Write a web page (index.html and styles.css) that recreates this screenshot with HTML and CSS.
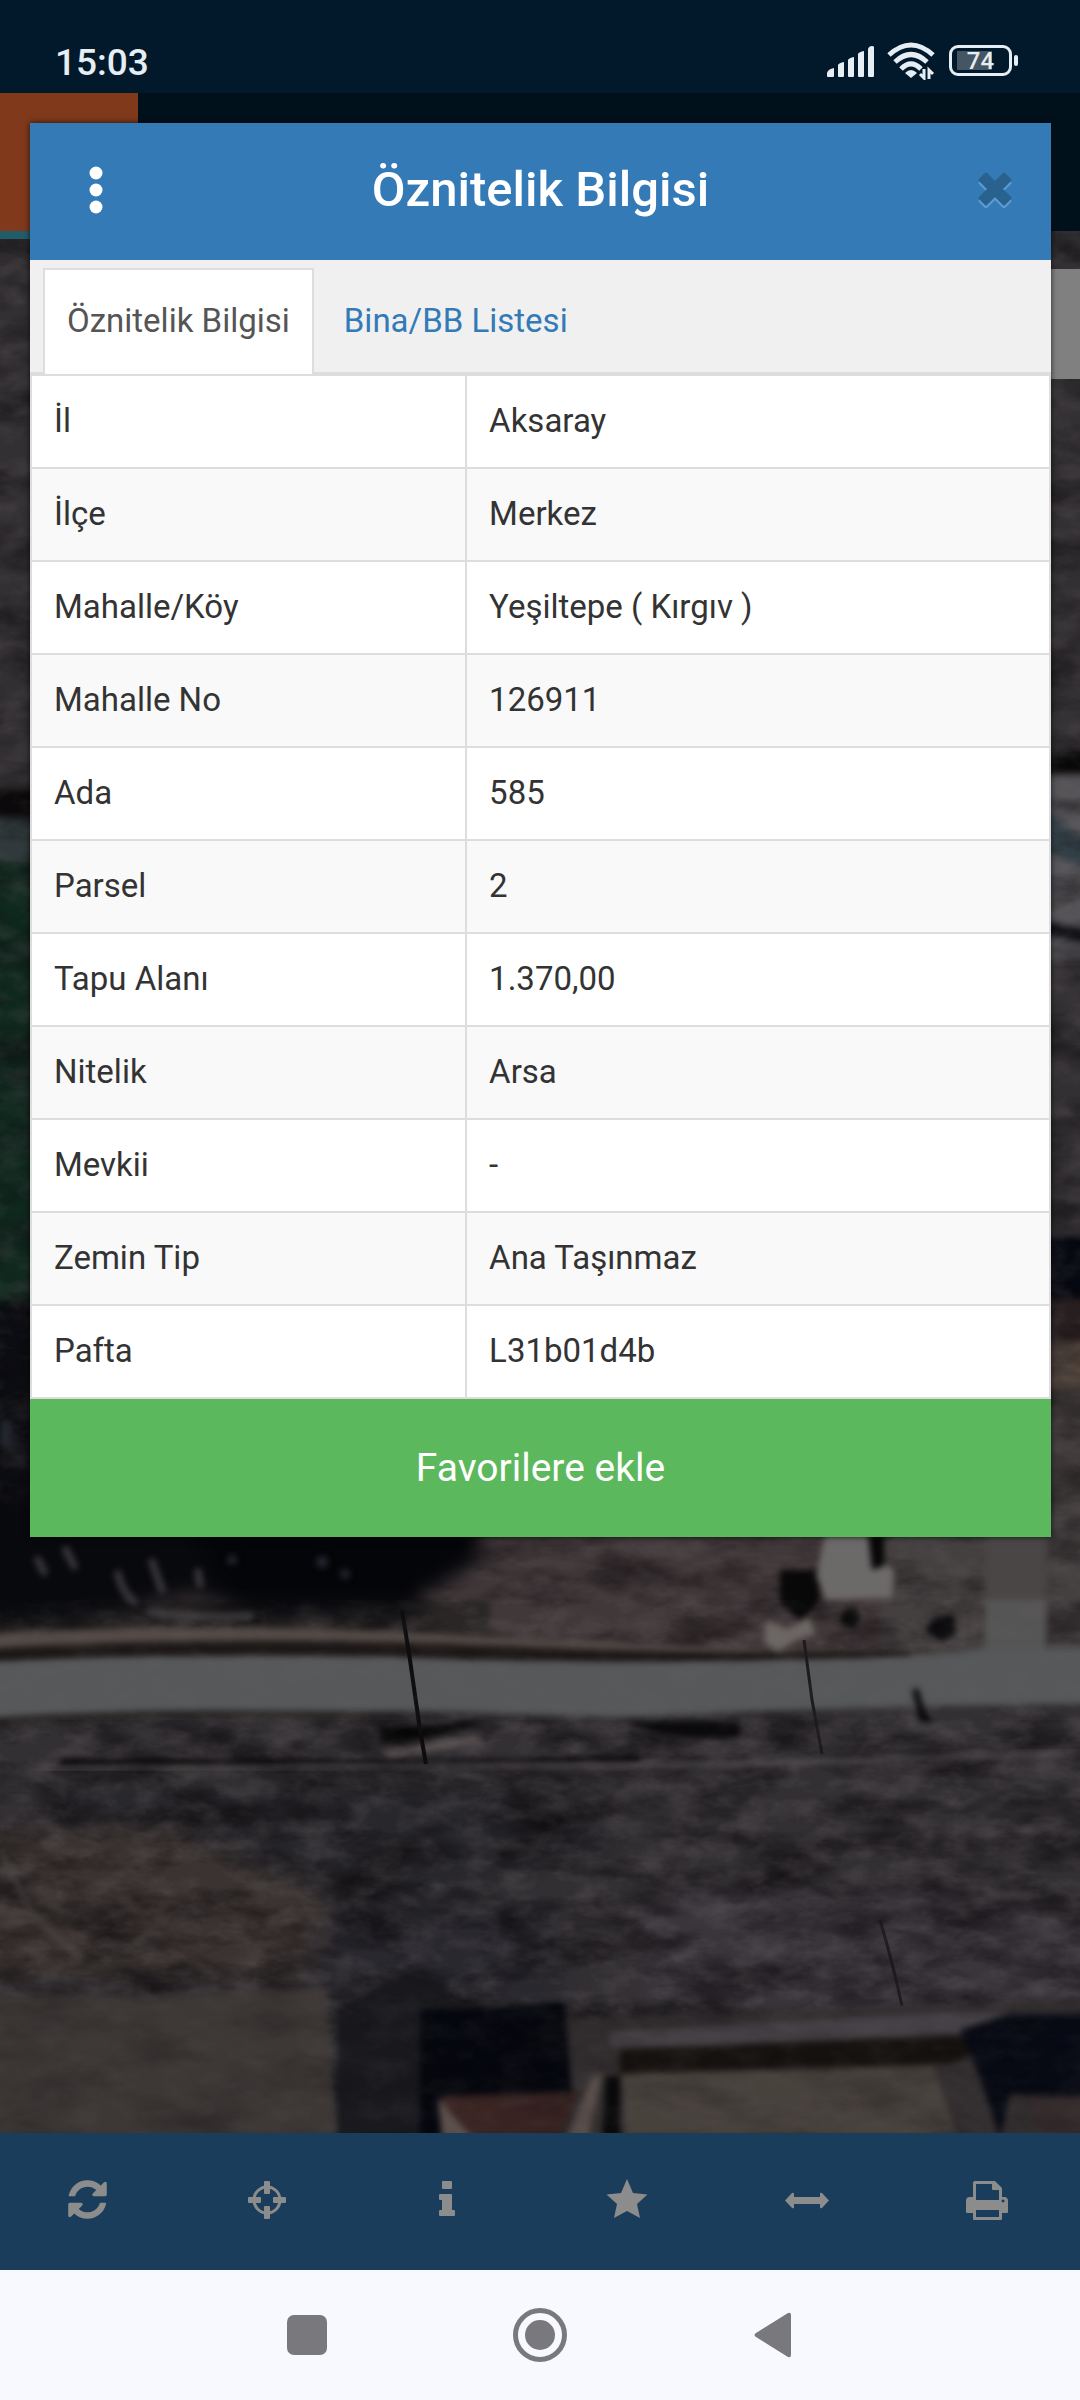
FILE: index.html
```html
<!DOCTYPE html>
<html lang="tr">
<head>
  <meta charset="UTF-8">
  <meta name="viewport" content="width=device-width, initial-scale=1.0">
  <title>Öznitelik Bilgisi</title>
  <link rel="stylesheet" href="styles.css">
</head>
<body>
  <div class="phone">
    <div class="status-bar">
      <span class="clock">15:03</span>
      <div class="status-icons">
        <svg class="signal" viewBox="0 0 48 32" width="48" height="32" fill="#e6edf3">
          <path d="M0 31v-3q1-4 7-5v8q0 1-1 1H1q-1 0-1-1zM11 31V20q1-2 6-3v14q0 1-1 1h-4q-1 0-1-1zM21 31V15q1-2 6-3v19q0 1-1 1h-4q-1 0-1-1zM31 31V9q1-2 6-3v25q0 1-1 1h-4q-1 0-1-1zM41 31V4q1-3 4-3 2 0 2 1v29q0 1-1 1h-4q-1 0-1-1z"/>
        </svg>
        <svg class="wifi" viewBox="0 0 48 38" width="48" height="38">
          <g fill="none" stroke="#e6edf3" stroke-width="5">
            <path d="M2 13Q24-7 46 13"/>
            <path d="M8 20Q24 5 40 20"/>
            <path d="M14 27Q24 17 34 27"/>
          </g>
          <path d="M24 36l-6-5q6-6 12 0z" fill="#e6edf3"/>
          <path d="M37 27v9l-4-4M42 37v-9l4 4" fill="none" stroke="#e6edf3" stroke-width="3"/>
        </svg>
        <div class="battery"><span>74</span></div>
      </div>
    </div>

    <header class="app-header">
      <div class="app-logo"></div>
    </header>

    <main class="map">
      <svg class="map-image" viewBox="0 231 1080 1902" preserveAspectRatio="xMidYMax slice">
        <defs>
          <filter id="soft" x="-10%" y="-10%" width="120%" height="120%" color-interpolation-filters="sRGB"><feGaussianBlur stdDeviation="3"/></filter>
          <filter id="softer" x="-20%" y="-20%" width="140%" height="140%" color-interpolation-filters="sRGB"><feGaussianBlur stdDeviation="10"/></filter>
          <filter id="shade" x="0" y="0" width="100%" height="100%" color-interpolation-filters="sRGB">
            <feTurbulence type="fractalNoise" baseFrequency="0.012 0.03" numOctaves="5" seed="7"/>
            <feColorMatrix values="0 0 0 0 0.04  0 0 0 0 0.03  0 0 0 0 0.04  2 0 0 0 -0.8"/>
          </filter>
          <filter id="light" x="0" y="0" width="100%" height="100%" color-interpolation-filters="sRGB">
            <feTurbulence type="fractalNoise" baseFrequency="0.03 0.05" numOctaves="4" seed="21"/>
            <feColorMatrix values="0 0 0 0 0.46  0 0 0 0 0.43  0 0 0 0 0.44  0 2 0 0 -0.8"/>
          </filter>
        </defs>
        <rect y="231" width="1080" height="1902" fill="#333033"/>

        <!-- strips beside the dialog -->
        <g filter="url(#soft)">
          <path d="M-10 790h60v26h-60z" fill="#0c0a0b"/>
          <path d="M-10 816h60v50h-60z" fill="#30393b"/>
          <path d="M-10 862h60v440h-60z" fill="#10291f"/>
          <path d="M-10 1302h60v240h-60z" fill="#0c0d12"/>
          <path d="M1040 752h50v20h-50z" fill="#080808"/>
          <path d="M1040 776h50v184h-50z" fill="#555357"/>
          <path d="M1040 850l50 20v-30l-50-30z" fill="#323f46"/>
          <path d="M1040 920l50 10v14l-50-10z" fill="#111216"/>
          <path d="M1040 1236h50v62h-50z" fill="#050811"/>
          <path d="M1040 1298h50v44h-50z" fill="#281e1f"/>
          <path d="M1040 1342h50v46h-50z" fill="#55483f"/>
          <path d="M1040 1388h50v280h-50z" fill="#3c3736"/>
        </g>

        <!-- ground north of the road -->
        <g filter="url(#soft)">
          <path d="M40 1500h1050v170H40z" fill="#413839"/>
          <path d="M880 1500h210v160H880z" fill="#454040"/>
          <path d="M-10 1600h500v60H-10z" fill="#2a2625"/>
        </g>

        <!-- field -->
        <g filter="url(#softer)">
          <path d="M40 1784h500l100 60-180 50H60z" fill="#28272b"/>
          <path d="M-20 1830l180-10 170 80-30 80H-20z" fill="#3a3331"/>
          <path d="M330 1900h220l20 100H330z" fill="#29282e"/>
          <path d="M640 1900l300-20 150 40v90H640z" fill="#39353b"/>
        </g>

        <rect y="231" width="1080" height="1902" filter="url(#shade)" opacity=".6"/>
        <rect y="231" width="1080" height="1902" filter="url(#light)" opacity=".22"/>

        <!-- trees -->
        <g filter="url(#softer)">
          <path d="M-20 1500h500v62l-50 22-18 30H250l-60-20-60 14-60 14H-20z" fill="#08090d"/>
          <path d="M190 1530h285v35l-60 35H230z" fill="#040509"/>
        </g>
        <g filter="url(#soft)" fill="none" stroke="#4a474c" stroke-width="8" stroke-linecap="round" opacity=".7">
          <path d="M118 1574q4 18 16 28M152 1562l10 28M198 1572l2 12M38 1560l6 12M66 1550l8 16"/>
          <path d="M150 1612q50 8 100 4"/>
        </g>
        <g filter="url(#soft)" fill="#24262e">
          <circle cx="232" cy="1560" r="5"/>
          <circle cx="322" cy="1562" r="6"/>
          <circle cx="345" cy="1574" r="5"/>
          <path d="M0 1420h12v28H0z"/>
        </g>
        <g filter="url(#soft)">
          <path d="M-10 1634q250-14 520 4 180 8 260 12v6q-200 0-330-8-220-12-450 2z" fill="#544b48"/>
          <path d="M-10 1648q250-14 520-2 180 8 400 6v7q-200 8-400 2-260-10-520 4z" fill="#1d1817"/>
          <path d="M985 1500h62v170h-62z" fill="#4a4646"/>
          <path d="M985 1600h60v66h-60z" fill="#565555"/>
        </g>

        <!-- road -->
        <g filter="url(#soft)">
          <path d="M-10 1662q200-10 420-4 200 8 380 2 150-2 195-12h105v56q-260 2-480 14-220-14-620 0z" fill="#56585a"/>
          <path d="M-10 1720q200-12 380-4" fill="none" stroke="#25211f" stroke-width="5"/>
          <path d="M380 1728q60-4 110-8l-50 16-60 7z" fill="#050505"/>
          <path d="M630 1721h110v16q-60 6-110-12z" fill="#0b0a0b"/>
          <path d="M60 1759l380 1 200-4v6l-200 4H60z" fill="#080708"/>
          <path d="M380 1752l100-18v8l-90 16z" fill="#5c5353"/>
        </g>
        <path d="M40 1769q350-4 620-4 250-4 420-14" fill="none" stroke="#5d585a" stroke-width="3" filter="url(#soft)"/>

        <!-- rubble and poles -->
        <g filter="url(#soft)">
          <path d="M780 1570h38l2 30-18 22-22-18z" fill="#080809"/>
          <path d="M826 1530h46l8 30 14 10-2 28-66 2-10-24z" fill="#6c6a68"/>
          <path d="M868 1534h16v32l-12 4z" fill="#070708"/>
          <circle cx="850" cy="1618" r="10" fill="#080808"/>
          <path d="M924 1630l10-12 20-4 2 20-14 8z" fill="#09090b"/>
          <path d="M766 1620l22 10 20-14 8 18-20 6-18 12-14-10z" fill="#6c6765"/>
          <path d="M912 1690l8 32 14 0-8-8-8-26z" fill="#050505"/>
        </g>
        <path d="M402 1610l8 50 10 70 6 34" fill="none" stroke="#0d0d0f" stroke-width="4"/>
        <path d="M804 1640l8 60 10 54" fill="none" stroke="#1c1b1d" stroke-width="3"/>
        <path d="M880 1920q12 40 22 86" fill="none" stroke="#1d1b1e" stroke-width="3"/>
        <path d="M0 1850l30 60 50 50" fill="none" stroke="#4a4544" stroke-width="4" filter="url(#soft)"/>

        <!-- buildings along the bottom -->
        <g filter="url(#soft)">
          <path d="M-10 1994l180 2 155-8 12 150H-10z" fill="#3d3836"/>
          <path d="M337 2010l70-40 40 10v160H337z" fill="#1a1a1e"/>
          <path d="M560 2020l420-16 110-6v140H570z" fill="#332f30"/>
          <path d="M610 2032l350-20 60 2v10l-60 10-350 14z" fill="#454045"/>
          <path d="M620 2050l330-14 60 4-60 24-330 10z" fill="#15120f"/>
          <path d="M622 2074l310-8 26 70H626z" fill="#48423d"/>
          <path d="M420 2010l144-8 8 90-130 6v40h-22z" fill="#05070e"/>
          <path d="M442 2096l136-4-18 46H442z" fill="#3a2523"/>
          <path d="M438 2098l34 40h-30zM566 2138l26-60 10-4-14 64z" fill="#5a4f4a"/>
          <path d="M606 2076h14v62h-18z" fill="#080808"/>
          <path d="M960 2030l50-16h80v84l-80-4-10 44-20-60z" fill="#070a14"/>
          <path d="M1024 2096h66v42h-50z" fill="#352c2d"/>
        </g>

        <rect y="1720" width="1080" height="413" filter="url(#shade)" opacity=".25"/>
        <rect y="1600" width="1080" height="533" filter="url(#light)" opacity=".1"/>
      </svg>
      <div class="map-control"></div>
    </main>

    <nav class="toolbar" aria-label="Harita araçları">
      <button class="tool" aria-label="Yenile">
        <svg viewBox="0 0 1536 1792" width="39" height="45"><path d="M1511 1056q0 5-1 7-64 268-268 434.500T764 1664q-146 0-282.500-55T238 1452l-129 129q-19 19-45 19t-45-19-19-45v-448q0-26 19-45t45-19h448q26 0 45 19t19 45-19 45l-137 137q71 66 161 102t187 36q134 0 250-65t186-179q11-17 53-117 8-23 30-23h192q13 0 22.500 9.500t9.500 22.500zm25-800v448q0 26-19 45t-45 19h-448q-26 0-45-19t-19-45 19-45l138-138Q969 384 768 384q-134 0-250 65T332 628q-11 17-53 117-8 23-30 23H50q-13 0-22.500-9.500T18 736v-7q65-268 270-434.500T768 128q146 0 284 55.500T1297 340l130-129q19-19 45-19t45 19 19 45z"/></svg>
      </button>
      <button class="tool" aria-label="Konum">
        <svg viewBox="0 0 44 44" width="44" height="44">
          <circle cx="22" cy="22" r="13" fill="none" stroke="#8c8c8c" stroke-width="3"/>
          <rect x="19" y="3" width="6" height="13" rx="1"/>
          <rect x="19" y="28" width="6" height="13" rx="1"/>
          <rect x="3" y="19" width="13" height="6" rx="1"/>
          <rect x="28" y="19" width="13" height="6" rx="1"/>
        </svg>
      </button>
      <button class="tool" aria-label="Bilgi">
        <svg viewBox="0 0 44 44" width="44" height="44">
          <rect x="17" y="3" width="10" height="8" rx="1"/>
          <path d="M15 16h11q1 0 1 1v15h2q1 0 1 1v4q0 1-1 1H15q-1 0-1-1v-4q0-1 1-1h2V22h-2q-1 0-1-1v-4q0-1 1-1z"/>
        </svg>
      </button>
      <button class="tool" aria-label="Favoriler">
        <svg viewBox="0 0 44 44" width="44" height="44"><path d="M22 1l6 14 14.500 1.500L32 26l3 14-13-7-13 7 3-14L1.500 16.500 16 15z"/></svg>
      </button>
      <button class="tool" aria-label="Ölçüm">
        <svg viewBox="0 0 44 44" width="44" height="44"><path d="M0 22.500L7 15q2-1 2 1v3h26v-3q0-2 2-1l7 7.500-7 7.500q-2 1-2-1v-3H9v3q0 2-2 1z"/></svg>
      </button>
      <button class="tool" aria-label="Yazdır">
        <svg viewBox="0 0 44 44" width="44" height="44">
          <path fill-rule="evenodd" d="M10 3h20l7 7v9h2q4 0 4 4v11q0 1-1 1h-5v6q0 1-1 1H9q-1 0-1-1v-6H2q-1 0-1-1V23q0-4 4-4h3V5q0-2 2-2zm1 3v16h23V12h-6q-1 0-1-1V6zm0 26v7h23v-7zM38 21.500a1.500 1.500 0 1 0 .1 0z"/>
        </svg>
      </button>
    </nav>

    <nav class="system-nav" aria-label="Sistem">
      <button class="sys" aria-label="Son uygulamalar">
        <svg viewBox="0 0 56 56" width="56" height="56"><rect x="8" y="8" width="40" height="40" rx="7"/></svg>
      </button>
      <button class="sys" aria-label="Ana ekran">
        <svg viewBox="0 0 56 56" width="56" height="56"><circle cx="28" cy="28" r="24.500" fill="none" stroke="#79787c" stroke-width="5"/><circle cx="28" cy="28" r="15"/></svg>
      </button>
      <button class="sys" aria-label="Geri">
        <svg viewBox="0 0 56 56" width="56" height="56"><path d="M11 26L43 6q3-1 3 2v40q0 3-3 2L11 30q-3-2 0-4z"/></svg>
      </button>
    </nav>

    <section class="modal" role="dialog" aria-labelledby="modalTitle">
      <div class="modal-header">
        <button class="icon-btn" aria-label="Menü">
          <svg viewBox="0 0 14 48" width="14" height="48" fill="#fff"><circle cx="7" cy="7" r="6.500"/><circle cx="7" cy="24" r="6.500"/><circle cx="7" cy="41" r="6.500"/></svg>
        </button>
        <h1 class="modal-title" id="modalTitle">Öznitelik Bilgisi</h1>
        <button class="icon-btn close" aria-label="Kapat">
          <svg viewBox="0 0 34 36" width="34" height="36">
            <g stroke-linejoin="round" stroke-width="3">
              <path d="M8 5l9 9 9-9 6 6-9 9 9 9-6 6-9-9-9 9-6-6 9-9-9-9z" fill="#5b9bd0" stroke="#5b9bd0"/>
              <path d="M8 2l9 9 9-9 6 6-9 9 9 9-6 6-9-9-9 9-6-6 9-9-9-9z" fill="#29628f" stroke="#29628f"/>
            </g>
          </svg>
        </button>
      </div>

      <div class="tabs">
        <a class="tab active" href="#oznitelik">Öznitelik Bilgisi</a>
        <a class="tab" href="#bina">Bina/BB Listesi</a>
      </div>

      <table class="info-table" id="oznitelik">
        <tbody>
          <tr><th scope="row">İl</th><td>Aksaray</td></tr>
          <tr><th scope="row">İlçe</th><td>Merkez</td></tr>
          <tr><th scope="row">Mahalle/Köy</th><td>Yeşiltepe ( Kırgıv )</td></tr>
          <tr><th scope="row">Mahalle No</th><td>126911</td></tr>
          <tr><th scope="row">Ada</th><td>585</td></tr>
          <tr><th scope="row">Parsel</th><td>2</td></tr>
          <tr><th scope="row">Tapu Alanı</th><td>1.370,00</td></tr>
          <tr><th scope="row">Nitelik</th><td>Arsa</td></tr>
          <tr><th scope="row">Mevkii</th><td>-</td></tr>
          <tr><th scope="row">Zemin Tip</th><td>Ana Taşınmaz</td></tr>
          <tr><th scope="row">Pafta</th><td>L31b01d4b</td></tr>
        </tbody>
      </table>

      <button class="btn-favorite">Favorilere ekle</button>
    </section>
  </div>
</body>
</html>
```
FILE: styles.css
```css
:root {
  --primary: #337ab7;
  --success: #5cb85c;
  --border: #ddd;
  --text: #333;
}

* {
  margin: 0;
  padding: 0;
  box-sizing: border-box;
}

body {
  font-family: Roboto, "Noto Sans", sans-serif;
  font-size: 33px;
  color: var(--text);
  background: #00111c;
}

button {
  border: none;
  background: none;
  font-family: inherit;
  cursor: pointer;
}

svg {
  display: block;
}

.phone {
  position: relative;
  display: flex;
  flex-direction: column;
  min-height: 100vh;
}

/* status bar */
.status-bar {
  display: flex;
  justify-content: space-between;
  align-items: center;
  height: 93px;
  padding: 28px 62px 0 55px;
  background: #01192b;
  color: #e6edf3;
}

.clock {
  padding-top: 4px;
  font-size: 37px;
  font-weight: 500;
}

.status-icons {
  display: flex;
  align-items: center;
  gap: 12px;
}

.battery {
  position: relative;
  display: flex;
  align-items: center;
  justify-content: center;
  width: 63px;
  height: 31px;
  margin-left: 2px;
  margin-right: 6px;
  border: 3px solid #e6edf3;
  border-radius: 9px;
  font-size: 24px;
  font-weight: 500;
  line-height: 24px;
  background: linear-gradient(#455561, #455561) 5px center / 35px 19px no-repeat;
}

.battery::after {
  content: "";
  position: absolute;
  right: -9px;
  width: 4px;
  height: 11px;
  border-radius: 2px;
  background: #e6edf3;
}

/* page behind the dialog */
.app-header {
  height: 138px;
  background: #00111c;
}

.app-logo {
  width: 138px;
  height: 146px;
  background: #80391b;
  border-bottom: 8px solid #235c69;
  position: relative;
  z-index: 1;
}

.map {
  position: relative;
  flex: 1;
  overflow: hidden;
  background: #333033;
}

.map-image {
  position: absolute;
  inset: 0;
  width: 100%;
  height: 100%;
}

.map-control {
  position: absolute;
  top: 38px;
  right: 0;
  width: 110px;
  height: 110px;
  background: #808080;
}

.toolbar {
  display: flex;
  height: 137px;
  background: #1a3d5c;
}

.tool {
  flex: 1;
  display: flex;
  align-items: center;
  justify-content: center;
  padding-right: 6px;
  padding-bottom: 4px;
  fill: #8c8c8c;
}

.system-nav {
  display: flex;
  justify-content: center;
  align-items: center;
  gap: 133px;
  height: 130px;
  background: #f8f8ff;
}

.sys {
  display: flex;
  justify-content: center;
  width: 100px;
  fill: #79787c;
}

/* dialog */
.modal {
  position: absolute;
  top: 123px;
  left: 30px;
  right: 29px;
  z-index: 2;
  background: #fff;
  box-shadow: 0 0 6px rgba(0, 0, 0, 0.7);
}

.modal-header {
  display: flex;
  align-items: center;
  justify-content: space-between;
  height: 137px;
  padding: 0 12px 4px 22px;
  background: var(--primary);
}

.modal-title {
  font-size: 49px;
  font-weight: 500;
  color: #fff;
}

.icon-btn {
  display: flex;
  justify-content: center;
  width: 88px;
  padding: 16px 0;
}

.icon-btn.close {
  margin-left: 10px;
}

.tabs {
  display: flex;
  gap: 6px;
  padding: 8px 13px 0;
  background: #f0f0f0;
  border-bottom: 2px solid var(--border);
}

.tab {
  margin-bottom: -2px;
  padding: 26px 22px 28px;
  border: 2px solid transparent;
  border-bottom: none;
  line-height: 50px;
  color: var(--primary);
  text-decoration: none;
}

.tab.active {
  background: #fff;
  border-color: var(--border);
  color: #555;
}

.info-table {
  width: 100%;
  border-collapse: collapse;
}

.info-table th,
.info-table td {
  padding: 21px 22px 23px;
  border: 2px solid var(--border);
  font-weight: 400;
  line-height: 47px;
  text-align: left;
}

.info-table th {
  width: 42.7%;
}

.info-table tr:nth-child(even) {
  background: #f9f9f9;
}

.btn-favorite {
  display: block;
  width: 100%;
  padding: 42px 0;
  background: var(--success);
  color: #fff;
  font-size: 39px;
  line-height: 54px;
}
```
